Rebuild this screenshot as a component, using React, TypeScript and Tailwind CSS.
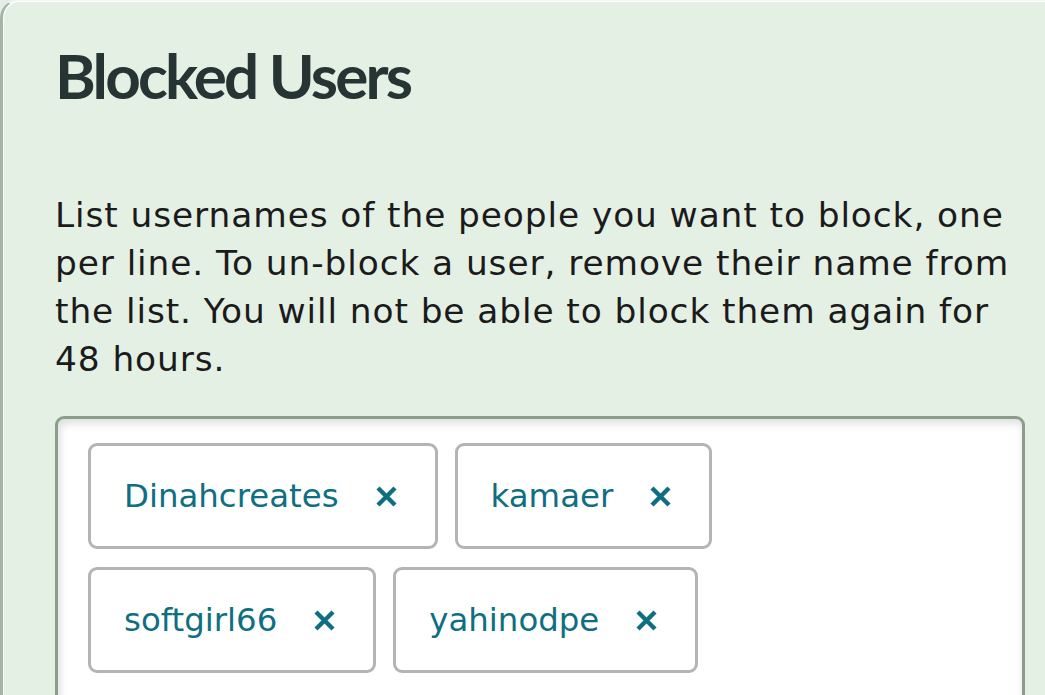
import React from "react";

function Tag({ name }: { name: string }) {
  return (
    <div className="flex h-[106px] items-center gap-[36px] rounded-[9px] border-[3px] border-[#b4b4b4] bg-white pl-[33px] pr-[37px]">
      <span className="text-[32.4px] leading-none text-[#0f6f82]">{name}</span>
      <svg width="23" height="23" viewBox="0 0 23 23" className="shrink-0">
        <path d="M3 3 L20 20 M20 3 L3 20" stroke="#0f6f82" strokeWidth="4.4" strokeLinecap="butt" />
      </svg>
    </div>
  );
}

export default function App() {
  return (
    <div
      className="h-[695px] w-[1045px] overflow-hidden bg-[#e8ece8]"
      style={{ fontFamily: '"DejaVu Sans", Verdana, sans-serif' }}
    >
      <div className="h-full rounded-tl-[18px] border-l-[3px] border-t border-[#a3b5a3] border-t-[#f4f8f4] bg-[#e5f0e5] pl-[52px] pr-[20px] shadow-[inset_1px_1px_0_#ffffff]">
        <h1
          className="mt-[43px] text-[62px] font-bold leading-none tracking-[-0.045em] text-[#263433]"
          style={{ fontFamily: 'Lato, sans-serif' }}
        >
          Blocked Users
        </h1>
        <p className="mt-[85px] text-[34.4px] leading-[48px] tracking-[0.9px] text-[#1b1b1b]">
          List usernames of the people you want to block, one per line. To un-block a user, remove their name from the list. You will not be able to block them again for 48 hours.
        </p>
        <div className="mt-[33px] h-[400px] rounded-[9px] border-[3px] border-[#8a9e8a] bg-white pl-[30px] pt-[24px] shadow-[inset_2px_4px_8px_rgba(0,0,0,0.14)]">
          <div className="flex flex-col gap-[18px]">
            <div className="flex gap-[17px]">
              <Tag name="Dinahcreates" />
              <Tag name="kamaer" />
            </div>
            <div className="flex gap-[17px]">
              <Tag name="softgirl66" />
              <Tag name="yahinodpe" />
            </div>
          </div>
        </div>
      </div>
    </div>
  );
}
